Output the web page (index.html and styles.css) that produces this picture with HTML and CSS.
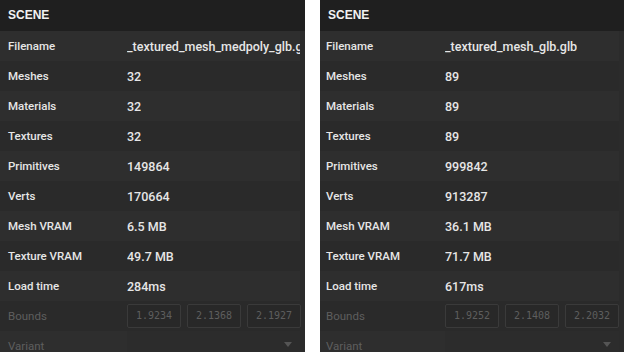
FILE: index.html
```html
<!DOCTYPE html>
<html lang="en">
<head>
    <meta charset="UTF-8">
    <title>Scene stats</title>
    <link rel="stylesheet" href="styles.css">
</head>
<body>
    <div class="panel panel-left">
        <div class="panel-header">SCENE</div>
        <div class="rows">
            <div class="row"><span class="label">Filename</span><span class="value">_textured_mesh_medpoly_glb.glb</span></div>
            <div class="row"><span class="label">Meshes</span><span class="value">32</span></div>
            <div class="row"><span class="label">Materials</span><span class="value">32</span></div>
            <div class="row"><span class="label">Textures</span><span class="value">32</span></div>
            <div class="row"><span class="label">Primitives</span><span class="value">149864</span></div>
            <div class="row"><span class="label">Verts</span><span class="value">170664</span></div>
            <div class="row"><span class="label">Mesh VRAM</span><span class="value">6.5 MB</span></div>
            <div class="row"><span class="label">Texture VRAM</span><span class="value">49.7 MB</span></div>
            <div class="row"><span class="label">Load time</span><span class="value">284ms</span></div>
            <div class="row disabled">
                <span class="label">Bounds</span>
                <div class="vec">
                    <span class="num">1.9234</span>
                    <span class="num">2.1368</span>
                    <span class="num">2.1927</span>
                </div>
            </div>
            <div class="row disabled">
                <span class="label">Variant</span>
                <div class="select"><span class="arrow"></span></div>
            </div>
        </div>
    </div>

    <div class="panel panel-right">
        <div class="panel-header">SCENE</div>
        <div class="rows">
            <div class="row"><span class="label">Filename</span><span class="value">_textured_mesh_glb.glb</span></div>
            <div class="row"><span class="label">Meshes</span><span class="value">89</span></div>
            <div class="row"><span class="label">Materials</span><span class="value">89</span></div>
            <div class="row"><span class="label">Textures</span><span class="value">89</span></div>
            <div class="row"><span class="label">Primitives</span><span class="value">999842</span></div>
            <div class="row"><span class="label">Verts</span><span class="value">913287</span></div>
            <div class="row"><span class="label">Mesh VRAM</span><span class="value">36.1 MB</span></div>
            <div class="row"><span class="label">Texture VRAM</span><span class="value">71.7 MB</span></div>
            <div class="row"><span class="label">Load time</span><span class="value">617ms</span></div>
            <div class="row disabled">
                <span class="label">Bounds</span>
                <div class="vec">
                    <span class="num">1.9252</span>
                    <span class="num">2.1408</span>
                    <span class="num">2.2032</span>
                </div>
            </div>
            <div class="row disabled">
                <span class="label">Variant</span>
                <div class="select"><span class="arrow"></span></div>
            </div>
        </div>
    </div>
</body>
</html>
```

FILE: styles.css
```css
body {
    margin: 0;
    padding: 0;
    background: #ffffff;
    display: flex;
    gap: 15px;
    height: 352px;
    overflow: hidden;
    font-family: Roboto, "Liberation Sans", Arial, sans-serif;
    font-weight: 500;
    font-size: 12px;
}
.panel {
    background: #2b2b2b;
    height: 352px;
    overflow: hidden;
}
.panel-left {
    width: 305px;
}
.panel-right {
    width: 304px;
}
.panel-header {
    height: 31px;
    line-height: 31px;
    background: #1f1f1f;
    color: #f2f2f2;
    font-family: "Liberation Sans", Arial, sans-serif;
    font-weight: 700;
    font-size: 12px;
    padding-left: 8px;
}
.rows {
    margin-right: 5px;
}
.row {
    height: 30px;
    display: flex;
    align-items: center;
    padding-left: 8px;
    background: #2e2e2e;
    color: #e6e6e6;
    white-space: nowrap;
}
.row:nth-child(even) {
    background: #2a2a2a;
}
.panel-right .row {
    padding-left: 6px;
}
.label {
    width: 119px;
    flex: none;
    font-size: 11.5px;
}
.value {
    overflow: hidden;
    font-size: 12.5px;
}
.disabled {
    color: #5e5e5e;
    font-weight: 400;
}
.vec {
    display: flex;
    gap: 6px;
}
.num {
    width: 52px;
    height: 22px;
    line-height: 22px;
    text-align: center;
    border: 1px solid #3a3a3a;
    background: #282828;
    border-radius: 2px;
    font-family: "DejaVu Sans Mono", "Liberation Mono", monospace;
    font-size: 10px;
    color: #5e5e5e;
}
.select {
    width: 174px;
    height: 30px;
    background: #2c2c2c;
    position: relative;
}
.arrow {
    position: absolute;
    right: 8px;
    top: 11px;
    border-left: 4px solid transparent;
    border-right: 4px solid transparent;
    border-top: 5px solid #555;
}
```
